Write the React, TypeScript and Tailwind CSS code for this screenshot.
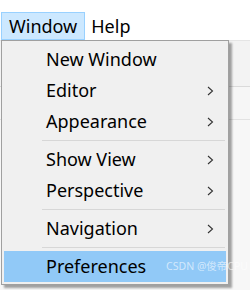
import React from "react";

type Item = { label: string; sub?: boolean; active?: boolean } | "sep";

const items: Item[] = [
  { label: "New Window" },
  { label: "Editor", sub: true },
  { label: "Appearance", sub: true },
  "sep",
  { label: "Show View", sub: true },
  { label: "Perspective", sub: true },
  "sep",
  { label: "Navigation", sub: true },
  "sep",
  { label: "Preferences", active: true },
];

function Chevron() {
  return (
    <svg width="7" height="10" viewBox="0 0 7 10" className="mr-[12px]">
      <path d="M1 1 L5.5 5 L1 9" fill="none" stroke="#333" strokeWidth="1.1" />
    </svg>
  );
}

export default function App() {
  return (
    <div className="relative w-[250px] h-[291px] overflow-hidden bg-white font-['Noto_Sans',sans-serif] text-black">
      {/* menu bar */}
      <div className="flex items-end h-[40px] bg-white pl-[1px] text-[18px] leading-none">
        <div className="flex items-center h-[28px] px-[7px] bg-[#cce8ff] border border-[#99d1ff]">Window</div>
        <div className="flex items-center h-[28px] px-[6px]">Help</div>
      </div>
      {/* window content behind */}
      <div className="flex flex-col">
        <div className="h-[47px] bg-[#f3f3f3] border-t border-[#e5e5e5] border-b border-b-[#dadada]" />
        <div className="h-[33px] bg-[#f6f6f6] border-b border-[#e2e2e2]" />
        <div className="h-[170px] bg-[#f7f7f7]" />
      </div>

      {/* dropdown */}
      <div className="absolute left-[1px] top-[40px] w-[228px] bg-[#f0f0f0] border border-[#a0a0a0] px-[2px] pt-[3px] pb-[2px] shadow-[3px_3px_2px_rgba(0,0,0,0.35)]">
        {items.map((it, i) =>
          it === "sep" ? (
            <div key={i} className="h-[7px] flex items-center pl-[38px] pr-[1px]">
              <div className="h-[1px] w-full bg-[#d7d7d7]" />
            </div>
          ) : (
            <div
              key={i}
              className={`flex items-center justify-between h-[31px] pl-[42px] text-[18px] leading-none ${
                it.active ? "bg-[#91c9f7]" : ""
              }`}
            >
              <span className="-mt-[1px]">{it.label}</span>
              {it.sub && <Chevron />}
            </div>
          )
        )}
      </div>
      <div className="absolute right-[2px] bottom-[20px] text-[10.5px] leading-none text-white/60 font-['Noto_Sans','Noto_Sans_CJK_SC',sans-serif]">
        CSDN @俊帝CPU
      </div>
    </div>
  );
}
